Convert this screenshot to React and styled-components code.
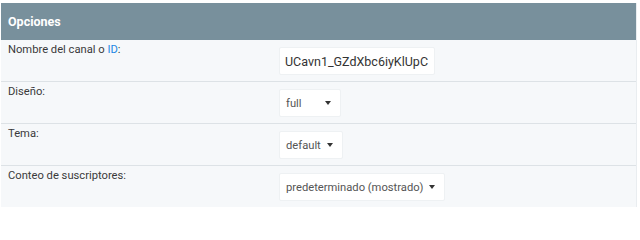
import React from "react";
import styled, { createGlobalStyle } from "styled-components";

const GlobalStyle = createGlobalStyle`
  body {
    margin: 0;
    background: #fff;
    font-family: Roboto, "Liberation Sans", Arial, sans-serif;
  }
`;

const Panel = styled.div`
  width: 635px;
  margin: 3px 0 0 1px;
  border-right: 1px solid #e9edf0;
`;

const Header = styled.div`
  height: 37px;
  display: flex;
  align-items: center;
  padding: 0 7px;
  background: #78909c;
  color: #fff;
  font-weight: 700;
  font-size: 12.5px;
`;

const Row = styled.div`
  display: grid;
  grid-template-columns: 271px 1fr;
  align-items: start;
  padding: 2px 7px 6px 7px;
  background: #f6f8fa;
  border-bottom: ${(p) => (p.last ? "none" : "1px solid #dde2e6")};
`;

const Label = styled.div`
  font-size: 11.2px;
  line-height: 16px;
  color: #3a3a3a;
`;

const Link = styled.a`
  color: #1e88e5;
  text-decoration: none;
`;

const TextInput = styled.input`
  box-sizing: border-box;
  margin-top: 5px;
  width: 156px;
  height: 28px;
  padding: 0 5px;
  border: 1px solid #eef1f3;
  border-radius: 2px;
  background: #fff;
  font-family: inherit;
  font-size: 12.5px;
  color: #333;
  outline: none;
`;

const Select = styled.div`
  box-sizing: border-box;
  margin-top: 5px;
  display: inline-flex;
  align-items: center;
  justify-content: space-between;
  gap: 6px;
  min-width: 62px;
  height: 28px;
  padding: 0 9px 0 6px;
  border: 1px solid #eef1f3;
  border-radius: 2px;
  background: #fff;
  font-size: 11.2px;
  color: #555;
  justify-self: start;
`;

const Caret = styled.span`
  width: 0;
  height: 0;
  border-left: 3.5px solid transparent;
  border-right: 3.5px solid transparent;
  border-top: 4px solid #333;
`;

export default function App() {
  return (
    <>
      <GlobalStyle />
      <Panel>
        <Header>Opciones</Header>
        <Row>
          <Label>
            Nombre del canal o <Link href="#">ID</Link>:
          </Label>
          <TextInput defaultValue="UCavn1_GZdXbc6iyKlUpC" />
        </Row>
        <Row>
          <Label>Diseño:</Label>
          <Select>
            full
            <Caret />
          </Select>
        </Row>
        <Row>
          <Label>Tema:</Label>
          <Select>
            default
            <Caret />
          </Select>
        </Row>
        <Row last>
          <Label>Conteo de suscriptores:</Label>
          <Select>
            predeterminado (mostrado)
            <Caret />
          </Select>
        </Row>
      </Panel>
    </>
  );
}
